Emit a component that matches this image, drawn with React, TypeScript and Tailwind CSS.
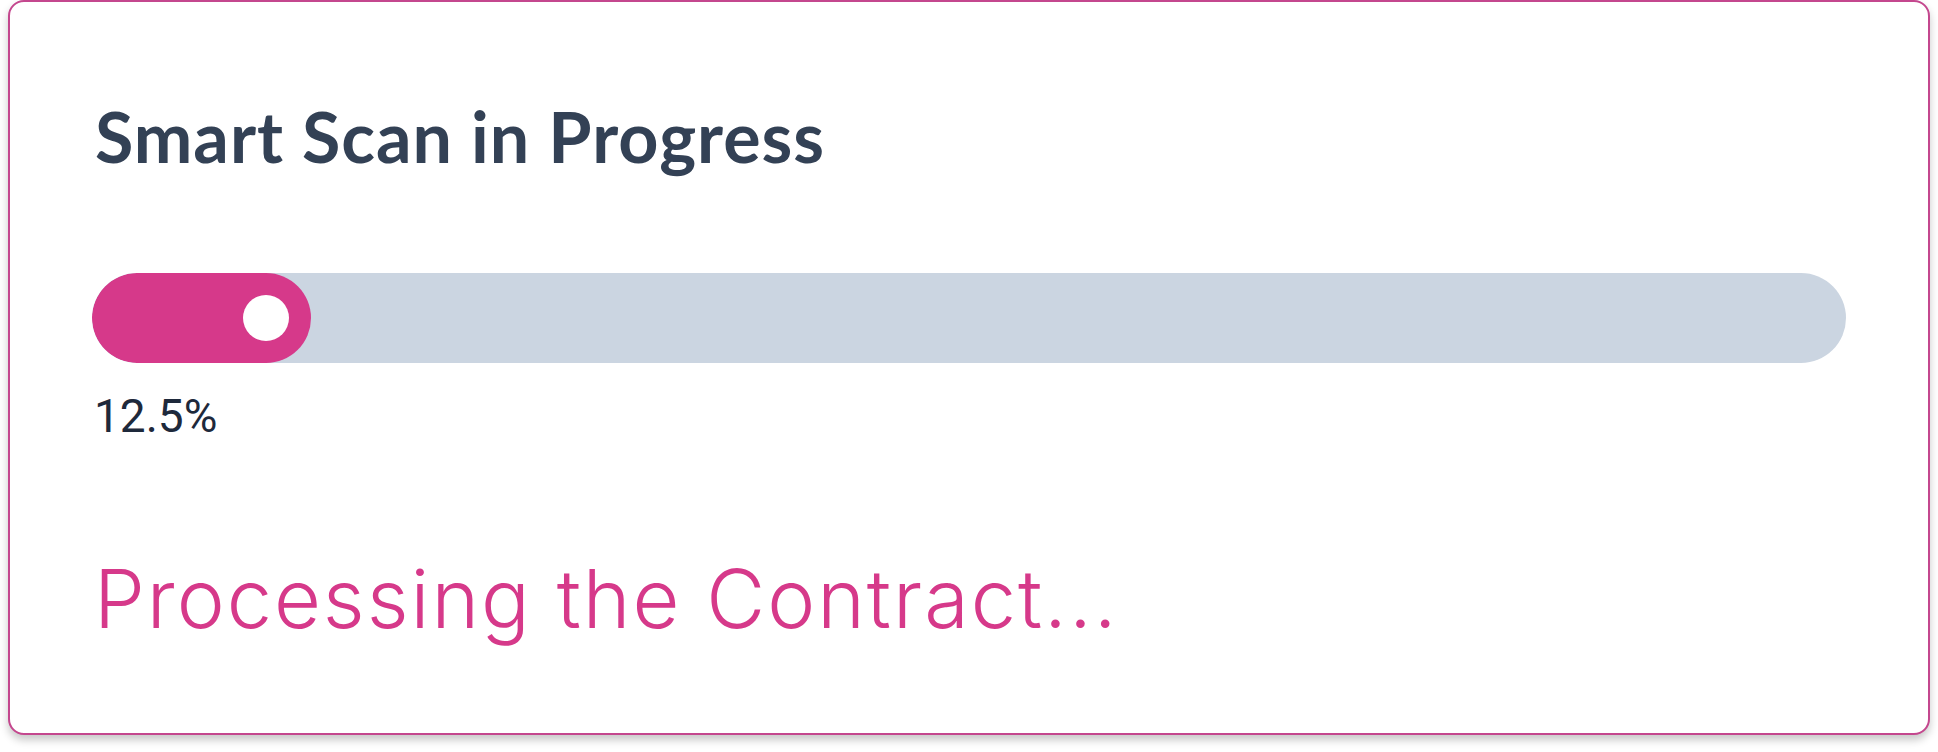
import React from "react";

const progress = 12.5;

export default function App() {
  return (
    <div className="w-[1938px] h-[752px] bg-white px-[8px]">
      <div className="w-[1922px] h-[735px] rounded-[16px] border-2 border-[#c4478e] bg-white shadow-[0_5px_8px_rgba(0,0,0,0.22)] px-[82px]">
        <h1
          className="mt-[99px] h-[70px] text-[70px] leading-none font-bold text-[#334155] pl-[3px] tracking-[1px]"
          style={{ fontFamily: "Lato, 'Noto Sans', sans-serif" }}
        >
          Smart Scan in Progress
        </h1>
        <div className="mt-[102px] h-[90px] w-full rounded-full bg-[#cbd5e1] overflow-hidden">
          <div
            className="h-full rounded-full bg-[#d6398a] flex items-center justify-end pr-[22px]"
            style={{ width: `${progress}%` }}
          >
            <div className="w-[46px] h-[46px] rounded-full bg-white" />
          </div>
        </div>
        <div
          className="mt-[30px] h-[46px] text-[46px] leading-none text-[#1e293b] pl-[2px]"
          style={{ fontFamily: "Roboto, sans-serif" }}
        >
          {progress}%
        </div>
        <div
          className="mt-[120px] text-[81px] leading-none font-light text-[#d6398a] pl-[2px] tracking-[2px]"
          style={{ fontFamily: "Inter, sans-serif" }}
        >
          Processing the Contract...
        </div>
      </div>
    </div>
  );
}
